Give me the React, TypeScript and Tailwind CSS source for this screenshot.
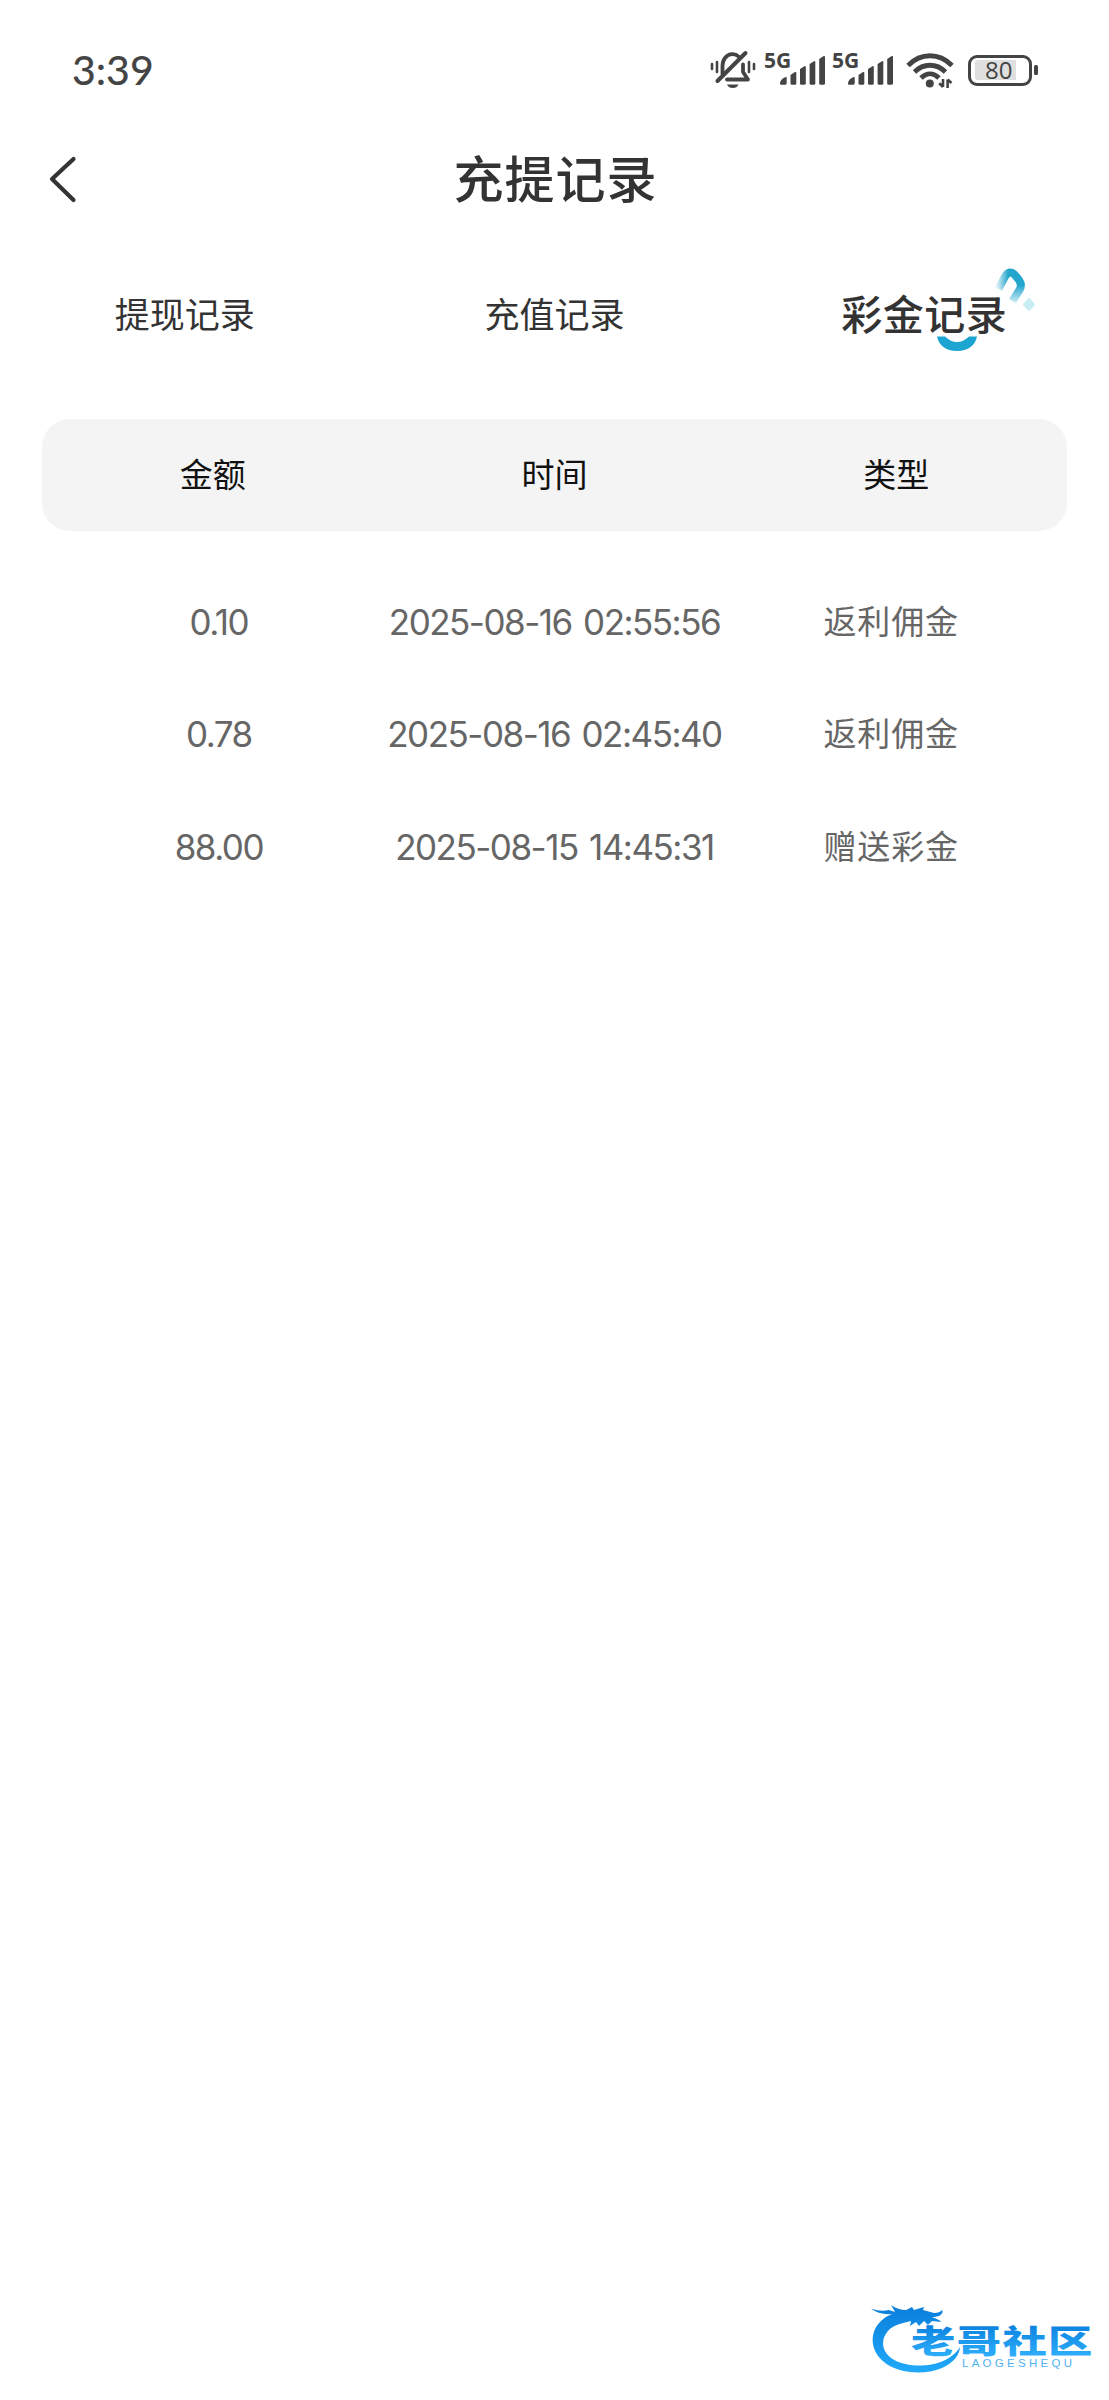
type Row = {
  amount: string
  time: string
  type: string
}

const rows: Row[] = [
  { amount: '0.10', time: '2025-08-16 02:55:56', type: '返利佣金' },
  { amount: '0.78', time: '2025-08-16 02:45:40', type: '返利佣金' },
  { amount: '88.00', time: '2025-08-15 14:45:31', type: '赠送彩金' },
]

const BellOff = () => (
  <svg width="46" height="40" viewBox="0 0 46 40" fill="none" stroke="#444" strokeLinecap="round">
    <path d="M12.5 24V16C12.5 9.5 16.5 4.5 22 4.2C25 4 27 5 28.5 6.5" strokeWidth="3.8" />
    <path d="M33 14.5V22L38 29.5H17" strokeWidth="3.8" strokeLinejoin="round" />
    <path d="M35.5 3L7.5 31" strokeWidth="4" />
    <path d="M17 34.5H28.5C27.5 37 25.5 38 22.8 38C20 38 18 37 17 34.5Z" fill="#444" stroke="none" />
    <path d="M2 14V19M7 12V22M39 12V22M44 14V19" strokeWidth="2.6" />
  </svg>
)

const Signal = () => (
  <div className="relative h-[40px] w-[62px] text-[#444]">
    <span className="absolute top-0 left-0 font-['Open_Sans',sans-serif] text-[21px] leading-[20px] font-bold">5G</span>
    <svg className="absolute top-px left-0" width="62" height="40" viewBox="0 0 62 40" fill="#444">
      <path d="M16 32.5C16 29.5 19 26.5 22.7 26V32C22.7 33 22 33.8 21 33.8H17.3C16.5 33.8 16 33.3 16 32.5Z" />
      <path d="M26.5 24L31 21Q32.3 20.5 32.3 22V32.3Q32.3 33.8 30.8 33.8H28Q26.5 33.8 26.5 32.3Z" />
      <path d="M36 18L40.5 15.2Q41.8 14.7 41.8 16.2V32.3Q41.8 33.8 40.3 33.8H37.5Q36 33.8 36 32.3Z" />
      <path d="M45.6 13L50 10.2Q51.3 9.7 51.3 11.2V32.3Q51.3 33.8 49.8 33.8H47.1Q45.6 33.8 45.6 32.3Z" />
      <path d="M55.2 8L59.7 5Q61 4.5 61 6V32.3Q61 33.8 59.5 33.8H56.7Q55.2 33.8 55.2 32.3Z" />
    </svg>
  </div>
)

const Wifi = () => (
  <svg width="48" height="40" viewBox="0 0 48 40" fill="none" stroke="#444">
    <path d="M2 15.5C15 2.5 33 2.5 46 15.5" strokeWidth="4.8" />
    <path d="M8.5 22C17.5 13 30.5 13 39.5 22" strokeWidth="4.8" />
    <path d="M15 28C20.5 22.5 27.5 22.5 33 28" strokeWidth="4.8" />
    <circle cx="23.8" cy="33.5" r="4" fill="#444" stroke="none" />
    <path d="M37 29V37M37 37L33.2 33.3M41.6 38V29.5M41.6 29.5L45.5 33" strokeWidth="2.6" />
  </svg>
)

const Battery = () => (
  <div className="flex items-center gap-[2px]">
    <div className="flex h-[31px] w-[64px] items-center rounded-[9px] border-[3px] border-[#444] px-[4px]">
      <div className="relative h-[20px] w-[41px] rounded-l-[3px] bg-[#dfdfdf]">
        <span className="absolute top-0 left-[10px] font-['Open_Sans',sans-serif] text-[24px] leading-[20px] font-medium text-[#444]">80</span>
      </div>
    </div>
    <div className="h-[10px] w-[4px] rounded-[1.5px] bg-[#444]" />
  </div>
)

const StatusBar = () => (
  <div className="flex h-[140px] items-center justify-between pr-[71px] pl-[72px]">
    <span className="pb-[2px] font-[Lato,sans-serif] text-[41px] leading-none font-medium text-[#444]">3:39</span>
    <div className="flex items-center">
      <BellOff />
      <div className="ml-[8px] flex gap-[6px]">
        <Signal />
        <Signal />
      </div>
      <div className="ml-[12px]">
        <Wifi />
      </div>
      <div className="ml-[14px]">
        <Battery />
      </div>
    </div>
  </div>
)

const ActiveTab = () => (
  <div className="relative text-[41px] font-medium">
    <svg className="absolute top-[-28px] left-[87px]" width="115" height="90" viewBox="0 0 115 90" fill="none">
      <defs>
        <linearGradient id="hook" gradientUnits="userSpaceOnUse" x1="69" y1="0" x2="97" y2="0">
          <stop offset="0" stopColor="#25a5cb" stopOpacity="0.15" />
          <stop offset="0.4" stopColor="#25a5cb" />
          <stop offset="1" stopColor="#1fa6cf" />
        </linearGradient>
        {/* fades the lower end of the hook out */}
        <linearGradient id="fade" gradientUnits="userSpaceOnUse" x1="0" y1="18" x2="0" y2="36">
          <stop offset="0" stopColor="#fff" />
          <stop offset="1" stopColor="#fff" stopOpacity="0.2" />
        </linearGradient>
        <mask id="hookMask" maskUnits="userSpaceOnUse" x="60" y="-2" width="45" height="45">
          <rect x="60" y="-2" width="45" height="45" fill="url(#fade)" />
        </mask>
      </defs>
      <path
        d="M70.5 22L77 9.5Q81 3 86 7L91 13Q94.5 18 91.5 23L84.500 34"
        stroke="url(#hook)"
        strokeWidth="8"
        mask="url(#hookMask)"
      />
      <path d="M101 32L106 37.500L101 43L96 37.500Z" fill="#c8edf3" stroke="#c8edf3" strokeWidth="2" strokeLinejoin="round" />
      <path d="M9 69.500H17Q29 80.500 41 69.500H49Q46 83.500 29 84Q12 83.500 9 69.500Z" fill="#1ba5d0" />
    </svg>
    <span className="relative tracking-[0.5px]">彩金记录</span>
  </div>
)

const Watermark = () => (
  <svg className="mt-auto self-end" width="259" height="120" viewBox="0 0 259 120">
    <defs>
      <linearGradient id="brand" gradientUnits="userSpaceOnUse" x1="0" y1="28" x2="0" y2="92">
        <stop offset="0" stopColor="#0b80dc" />
        <stop offset="1" stopColor="#20a9fb" />
      </linearGradient>
      <linearGradient id="brandText" x1="0" y1="0" x2="0" y2="1">
        <stop offset="0.2" stopColor="#0b82e0" />
        <stop offset="0.9" stopColor="#2fb0fb" />
      </linearGradient>
    </defs>
    <path
      d="M21 28.500Q30 32 39 30L45 32Q43 28 41 25Q48 30 56 30L62 27L64 30L74 27L73 30L84 33Q90 33 92 30Q94 33 89 36L82 37.500Q89 39 91 42L82 41L78 45L74 41L69 46L66 42L60 46L61 41L53 43C39 46 33 55 33 64C34 78 50 86 72 85.500C91 85 104 77 110 67Q109 80 92 88C73 96 47 93 34 82C20 71 19 52 31 41Q36 36 42 34Q29 35 21 28.500Z"
      fill="url(#brand)"
    />
    <text
      x="61"
      y="73"
      fill="url(#brandText)"
      fontSize="32"
      fontWeight="900"
      textLength="131"
      transform="translate(61 0) scale(1.385 1) translate(-61 0)"
      className="font-['Noto_Sans_CJK_SC',sans-serif]"
    >
      老哥社区
    </text>
    <text x="112" y="87" fill="#4fb2f2" fontSize="11.5" textLength="110" className="font-['Liberation_Sans',sans-serif]">
      LAOGESHEQU
    </text>
  </svg>
)

const App = () => {
  return (
    <div className="flex min-h-[2400px] w-full flex-col bg-white font-[Inter,'Noto_Sans_CJK_SC',sans-serif] text-[#333]">
      <StatusBar />

      <header className="grid h-[80px] grid-cols-[100px_1fr_100px] items-center">
        <button className="pl-[49px]">
          <svg width="28" height="48" viewBox="0 0 28 48" fill="none" stroke="#333" strokeWidth="4.2" strokeLinecap="round" strokeLinejoin="round">
            <path d="M24.5 3L3 23L24.5 44" />
          </svg>
        </button>
        <h1 className="pl-[2px] text-center text-[50px] leading-none font-medium tracking-[1px]">充提记录</h1>
      </header>

      <nav className="grid h-[192px] grid-cols-3 place-items-center pb-[2px] text-[35px] leading-none">
        <span>提现记录</span>
        <span>充值记录</span>
        <ActiveTab />
      </nav>

      <div className="mx-[42px] mt-[7px] grid h-[112px] grid-cols-3 place-items-center rounded-[28px] bg-[#f4f4f4] text-[33px] leading-none text-[#111]">
        <span>金额</span>
        <span>时间</span>
        <span>类型</span>
      </div>

      <div className="mx-[51px] mt-[35px] text-[#666]">
        {rows.map((row) => (
          <div key={row.time} className="grid h-[112.5px] grid-cols-3 place-items-center text-[35px] leading-none tracking-[-1.5px] [word-spacing:3px]">
            <span>{row.amount}</span>
            <span>{row.time}</span>
            <span className="pl-[2px] text-[33px] tracking-[0.8px]">{row.type}</span>
          </div>
        ))}
      </div>

      <Watermark />
    </div>
  )
}

export default App
